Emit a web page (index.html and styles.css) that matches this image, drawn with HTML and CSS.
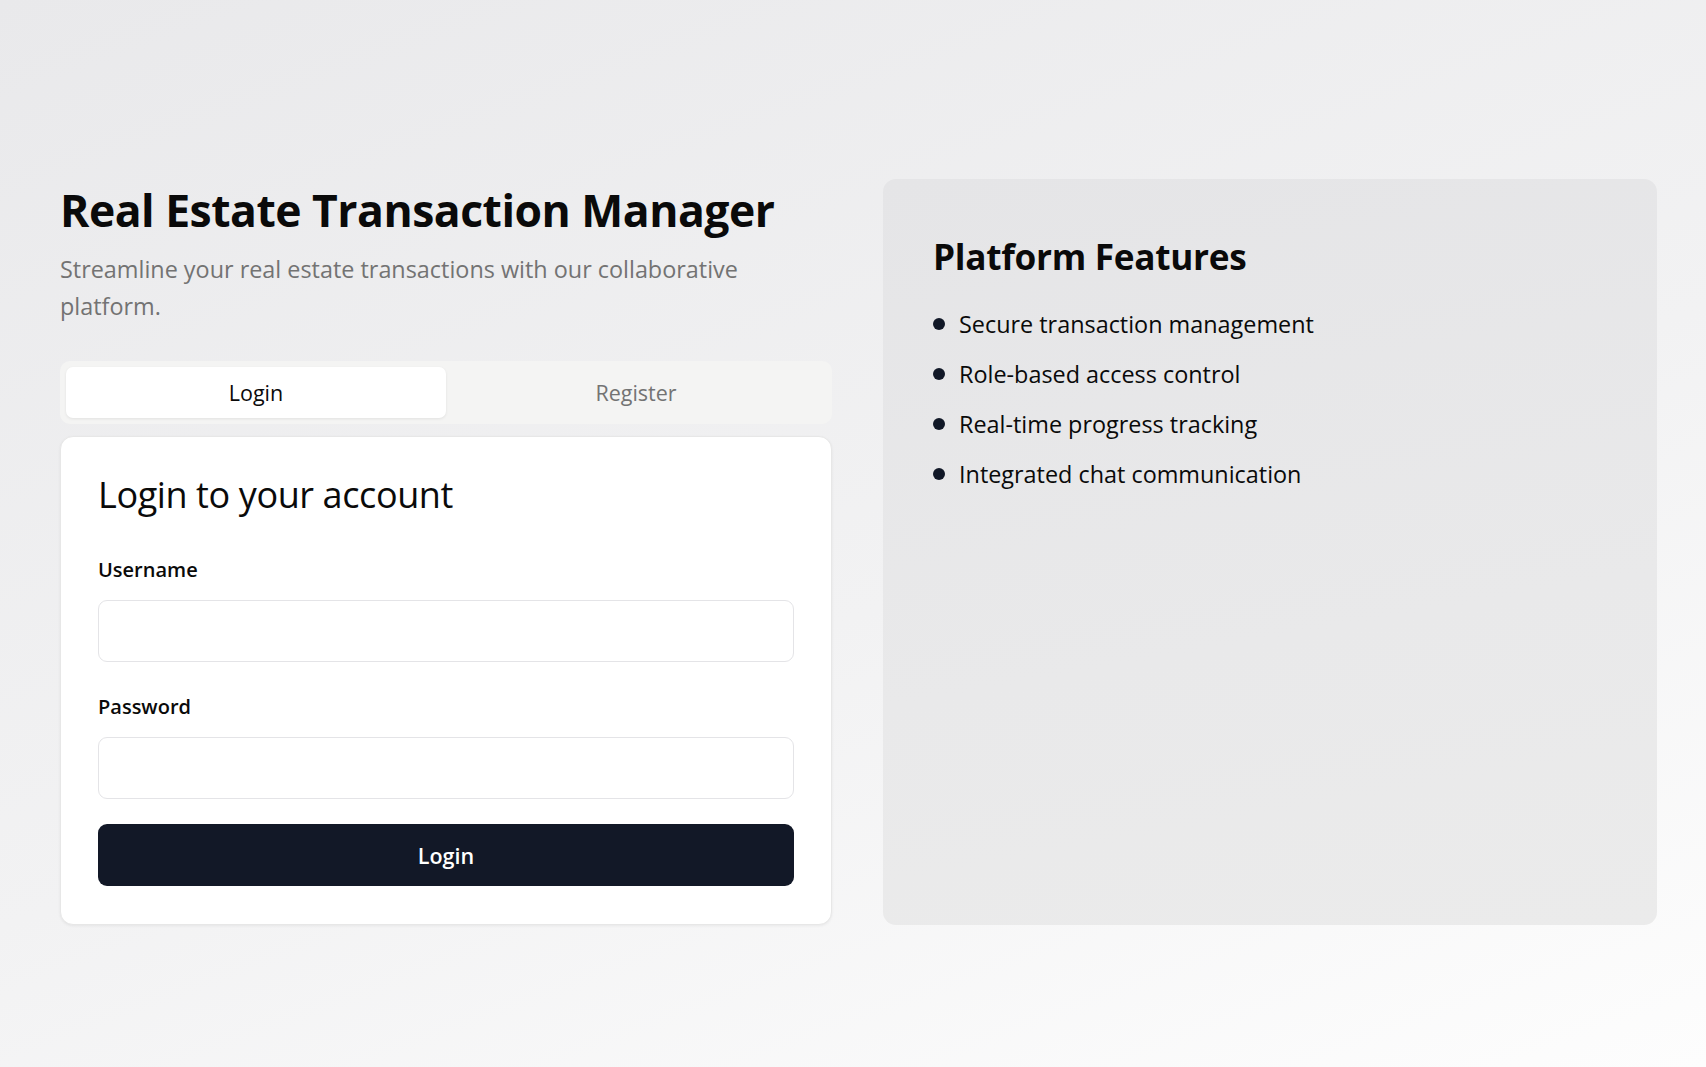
FILE: index.html
```html
<!DOCTYPE html>
<html lang="en">
<head>
<meta charset="utf-8">
<title>Real Estate Transaction Manager</title>
<link rel="stylesheet" href="styles.css">
</head>
<body>
<main class="page">
  <div class="layout">
    <section class="left">
      <h1 class="title">Real Estate Transaction Manager</h1>
      <p class="subtitle">Streamline your real estate transactions with our collaborative platform.</p>
      <div class="tabs">
        <button class="tab tab-active">Login</button>
        <button class="tab">Register</button>
      </div>
      <div class="card">
        <h2 class="card-title">Login to your account</h2>
        <form class="form">
          <div class="field">
            <label class="label" for="username">Username</label>
            <input class="input" id="username" type="text">
          </div>
          <div class="field">
            <label class="label" for="password">Password</label>
            <input class="input" id="password" type="password">
          </div>
          <button class="submit" type="button">Login</button>
        </form>
      </div>
    </section>
    <aside class="features">
      <h2 class="features-title">Platform Features</h2>
      <ul class="feature-list">
        <li class="feature"><span class="dot"></span>Secure transaction management</li>
        <li class="feature"><span class="dot"></span>Role-based access control</li>
        <li class="feature"><span class="dot"></span>Real-time progress tracking</li>
        <li class="feature"><span class="dot"></span>Integrated chat communication</li>
      </ul>
    </aside>
  </div>
</main>
</body>
</html>
```
FILE: styles.css
```css
* { box-sizing: border-box; }
html, body { margin: 0; padding: 0; }
body {
  font-family: "Open Sans", "Noto Sans", sans-serif;
  color: #0a0a0a;
  background: linear-gradient(160deg, #e9e9eb 0%, #f2f2f3 55%, #fdfdfd 100%);
  min-height: 100vh;
}
.page {
  min-height: 1067px;
  padding: 179px 49px 0 60px;
}
.layout {
  display: grid;
  grid-template-columns: 772px 774px;
  column-gap: 51px;
  align-items: stretch;
}
.left { display: flex; flex-direction: column; }
.title {
  margin: 3px 0 0;
  font-size: 44.5px;
  line-height: 56px;
  font-weight: 700;
  letter-spacing: -0.5px;
  color: #0a0a0a;
}
.subtitle {
  margin: 13px 0 0;
  font-size: 23.4px;
  line-height: 37px;
  color: #737373;
  max-width: 700px;
}
.tabs {
  margin-top: 36px;
  height: 63px;
  padding: 6px;
  background: #f4f4f3;
  border-radius: 10px;
  display: grid;
  grid-template-columns: 1fr 1fr;
}
.tab {
  border: 0;
  background: transparent;
  font-family: inherit;
  font-size: 21.5px;
  font-weight: 500;
  color: #737373;
  border-radius: 7px;
  cursor: pointer;
}
.tab-active {
  background: #ffffff;
  color: #0a0a0a;
  box-shadow: 0 1px 3px rgba(0,0,0,0.08);
}
.card {
  margin-top: 12px;
  background: #ffffff;
  border: 1px solid #e7e7e7;
  border-radius: 13px;
  box-shadow: 0 1px 3px rgba(0,0,0,0.06);
  padding: 36px 37px 38px;
}
.card-title {
  margin: 0;
  font-size: 36px;
  line-height: 44px;
  font-weight: 500;
  letter-spacing: -0.4px;
  color: #0a0a0a;
}
.form { margin-top: 39.5px; display: flex; flex-direction: column; }
.field { display: flex; flex-direction: column; margin-bottom: 25px; }
.field + .field { margin-top: 6.5px; }
.label {
  font-size: 20px;
  line-height: 26px;
  font-weight: 600;
  color: #0a0a0a;
  margin-bottom: 17.5px;
}
.input {
  height: 62px;
  border: 1px solid #e4e4e7;
  border-radius: 9px;
  background: #fff;
  font-family: inherit;
  font-size: 20px;
  padding: 0 16px;
}
.submit {
  height: 62px;
  border: 0;
  border-radius: 9px;
  background: #121827;
  color: #fff;
  font-family: inherit;
  font-size: 21.5px;
  font-weight: 600;
}
.features {
  background: linear-gradient(170deg, #e5e5e7 0%, #e9e9ea 60%, #ebebeb 100%);
  border-radius: 13px;
  padding: 54.5px 50px 44px;
}
.features-title {
  margin: 0;
  font-size: 35.2px;
  line-height: 44px;
  font-weight: 700;
  letter-spacing: -0.3px;
  color: #0a0a0a;
}
.feature-list {
  list-style: none;
  margin: 31.5px 0 0;
  padding: 0;
}
.feature {
  display: flex;
  align-items: center;
  font-size: 23.4px;
  line-height: 30px;
  color: #0a0a0a;
  margin-bottom: 20px;
}
.dot {
  width: 12px;
  height: 12px;
  border-radius: 50%;
  background: #111827;
  margin-right: 14px;
  flex: none;
}
```
